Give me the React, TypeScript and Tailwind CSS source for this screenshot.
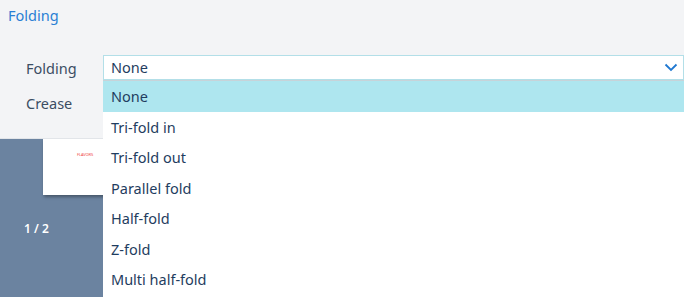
import React from "react";

const items = ["None", "Tri-fold in", "Tri-fold out", "Parallel fold", "Half-fold", "Z-fold", "Multi half-fold"];

export default function App() {
  return (
    <div
      className="relative w-[684px] h-[297px] overflow-hidden bg-[#6b83a0]"
      style={{ fontFamily: '"Noto Sans", "Open Sans", sans-serif' }}
    >
      {/* top settings panel */}
      <div className="relative z-10 h-[139px] bg-[#f3f4f6] border-b border-[#e2e5e9]">
        <div className="pl-[8px] pt-[5px] text-[14.5px] leading-[20px] text-[#2a7fd4]">Folding</div>
        <div className="mt-[30px] flex items-center">
          <div className="w-[103px] pl-[26px] pt-[2px] text-[14.5px] text-[#3b4d63]">Folding</div>
          <div className="flex-1 h-[25px] bg-white border border-[#b3dfe8] flex items-center justify-between pl-[7px] pr-[5px]">
            <span className="text-[14.5px] text-[#1f3d60] pt-[1px]">None</span>
            <svg width="14" height="9" viewBox="0 0 14 9" fill="none">
              <path d="M1.5 1.5 L7 7 L12.5 1.5" stroke="#1f78d1" strokeWidth="1.8" />
            </svg>
          </div>
        </div>
        <div className="mt-[13px] pl-[26px] text-[14.5px] text-[#3b4d63]">Crease</div>
      </div>

      {/* preview area */}
      <div className="flex flex-col">
        <div className="ml-[43px] w-[100px] h-[56px] bg-white shadow-[1px_2px_3px_rgba(0,0,0,0.35)] relative">
          <span className="absolute left-[34px] top-[13px] text-[4px] text-[#ef4a4a] tracking-tight">FLAVORS</span>
        </div>
        <div className="mt-[25px] pl-[24px] text-[12px] font-semibold text-white">1 / 2</div>
      </div>

      {/* dropdown list */}
      <div className="absolute z-20 left-[103px] top-[80px] w-[581px] bg-white border-t border-[#c7d3d9]">
        {items.map((it, i) => (
          <div
            key={it}
            className={
              "h-[30.6px] flex items-center pl-[8px] pt-[1px] text-[14.5px] text-[#1f3d60] " +
              (i === 0 ? "bg-[#aee6ef]" : "bg-white")
            }
          >
            {it}
          </div>
        ))}
        <div className="h-[10px] bg-white" />
      </div>
    </div>
  );
}
